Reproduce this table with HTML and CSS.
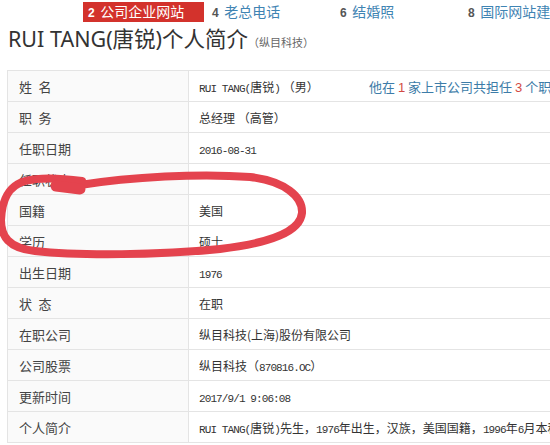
FILE: index.html
```html
<!DOCTYPE html>
<html lang="zh-CN">
<head>
  <meta charset="UTF-8">
  <meta name="viewport" content="width=device-width, initial-scale=1.0">
  <title>RUI TANG(唐锐)个人简介</title>
  <link rel="stylesheet" href="styles.css">
</head>
<body>
  <div class="page">
    <div class="tabs">
      <a class="tab active"><b>2</b> 公司企业网站</a>
      <a class="tab"><b>4</b> 老总电话</a>
      <a class="tab"><b>6</b> 结婚照</a>
      <a class="tab"><b>8</b> 国际网站建</a>
    </div>

    <h1 class="title">RUI TANG(唐锐)个人简介<small>（纵目科技）</small></h1>

    <table class="info">
      <tr>
        <td class="label">姓&ensp;名</td>
        <td><span class="name"><span class="num">RUI TANG(</span>唐锐<span class="num">)</span> （男）</span><span class="note">他在 <em>1</em> 家上市公司共担任 <em>3</em> 个职务</span></td>
      </tr>
      <tr>
        <td class="label">职&ensp;务</td>
        <td>总经理 （高管）</td>
      </tr>
      <tr>
        <td class="label">任职日期</td>
        <td><span class="num">2016-08-31</span></td>
      </tr>
      <tr>
        <td class="label">任职状态</td>
        <td></td>
      </tr>
      <tr>
        <td class="label">国籍</td>
        <td>美国</td>
      </tr>
      <tr>
        <td class="label">学历</td>
        <td>硕士</td>
      </tr>
      <tr>
        <td class="label">出生日期</td>
        <td><span class="num">1976</span></td>
      </tr>
      <tr>
        <td class="label">状&ensp;态</td>
        <td>在职</td>
      </tr>
      <tr>
        <td class="label">在职公司</td>
        <td>纵目科技(上海)股份有限公司</td>
      </tr>
      <tr>
        <td class="label">公司股票</td>
        <td>纵目科技（<span class="num">870816.OC</span>）</td>
      </tr>
      <tr>
        <td class="label">更新时间</td>
        <td><span class="num">2017/9/1 9:06:08</span></td>
      </tr>
      <tr>
        <td class="label">个人简介</td>
        <td><span class="num">RUI TANG(</span>唐锐<span class="num">)</span>先生，<span class="num">1976</span>年出生，汉族，美国国籍，<span class="num">1996</span>年<span class="num">6</span>月本科</td>
      </tr>
    </table>

    <!-- 手画的红圈 -->
    <svg class="mark" width="550" height="445" viewBox="0 0 550 445">
      <path d="M 80 185 C 130 177, 200 173, 250 177 C 285 181, 303 197, 302 213 C 300 232, 270 243, 220 249 C 160 255, 80 256, 35 251 C 8 248, 1 236, 1 220 C 2 200, 8 186, 25 181 C 40 177, 60 178, 82 181" />
      <path class="blob" d="M 56 186 L 80 189" />
    </svg>
  </div>
</body>
</html>
```

FILE: styles.css
```css
html, body {
  margin: 0;
  padding: 0;
  background: #fff;
  overflow: hidden;
}

body {
  font-family: "Noto Sans", "Noto Sans CJK SC", sans-serif;
  color: #333;
}

.page {
  position: relative;
  width: 550px;
  height: 445px;
  overflow: hidden;
}

.tabs {
  display: flex;
  height: 24px;
  padding: 2px 0 0 83px;
  box-sizing: border-box;
  white-space: nowrap;
}

.tab {
  flex: none;
  width: 121px;
  height: 20px;
  margin-right: 7px;
  padding-left: 1px;
  box-sizing: border-box;
  font-size: 14px;
  line-height: 20px;
  color: #3f84b3;
}

.tab b {
  font-family: "Liberation Sans", sans-serif;
  font-size: 12px;
  color: #555;
  margin-right: 2px;
}

.tab.active {
  padding-left: 5px;
  background: #d3322c;
  color: #fff;
}

.tab.active b {
  color: #fff;
}

.title {
  margin: 2px 0 0 8px;
  font-size: 21.5px;
  font-weight: normal;
  line-height: 26px;
  color: #333;
  white-space: nowrap;
}

.title small {
  font-size: 11px;
  color: #666;
}

.info {
  margin: 14px 0 0 7px;
  width: 580px;
  border-collapse: collapse;
  font-family: "Noto Sans CJK SC", sans-serif;
  font-size: 12px;
}

.info td {
  height: 30px;
  padding: 0 0 0 10px;
  border: 1px solid #e4e4e4;
  white-space: nowrap;
}

.info td.label {
  width: 169px;
  padding-left: 11px;
  font-size: 13px;
  color: #444;
  background: #fafafa;
}

.num {
  font-family: "Liberation Mono", monospace;
  font-size: 11px;
  letter-spacing: -0.9px;
}

.name {
  display: inline-block;
  width: 170px;
}

.note {
  font-size: 13px;
  color: #3d7ca8;
}

.note em {
  font-style: normal;
  font-family: "Liberation Sans", sans-serif;
  color: #d24a45;
}

.mark {
  position: absolute;
  left: 0;
  top: 0;
  pointer-events: none;
}

.mark path {
  fill: none;
  stroke: #e4434e;
  stroke-width: 8;
  stroke-linecap: round;
  stroke-linejoin: round;
}

.mark path.blob {
  stroke-width: 11;
}
```
